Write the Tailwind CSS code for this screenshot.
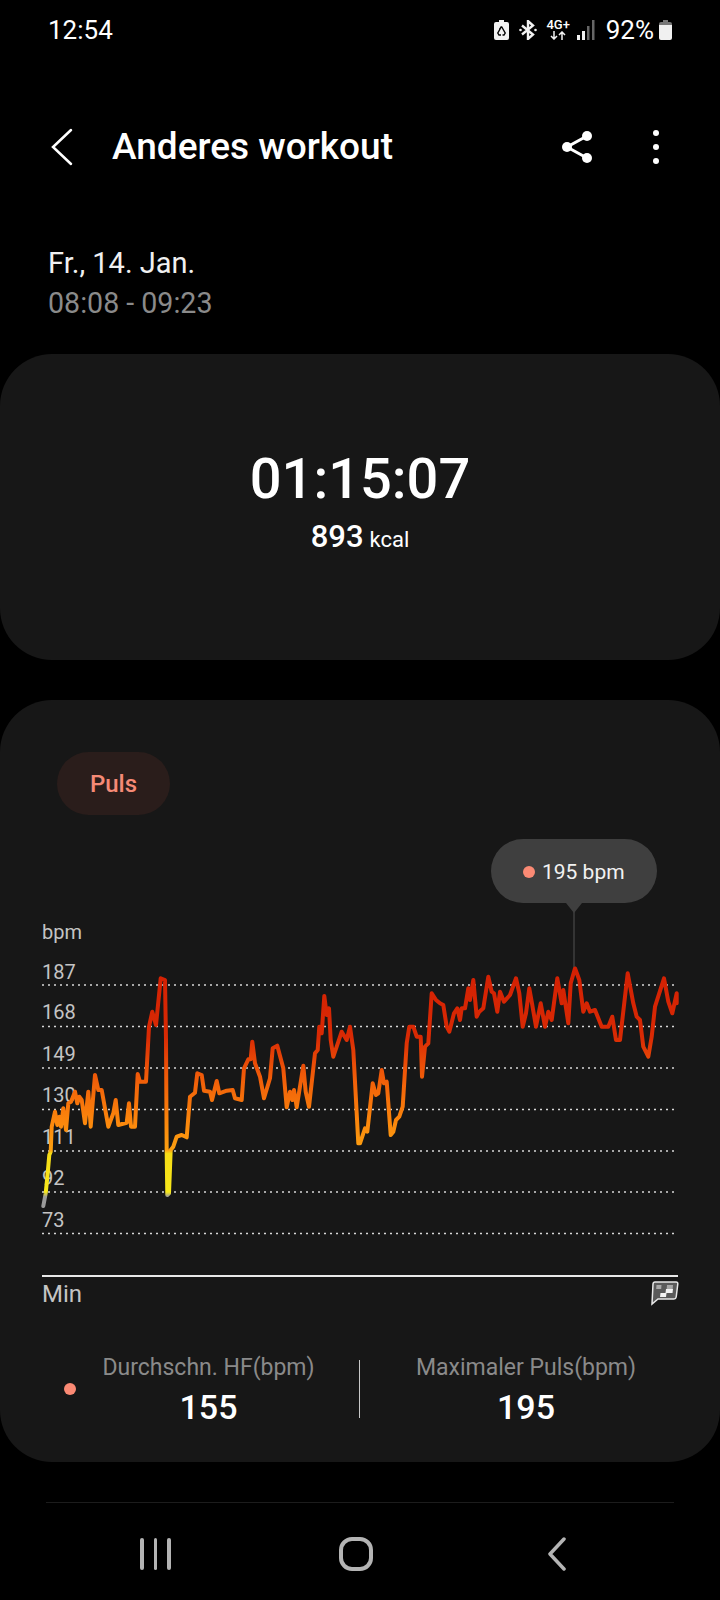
<!DOCTYPE html>
<html lang="en">
<head>
  <meta charset="UTF-8" />
  <meta name="viewport" content="width=device-width, initial-scale=1" />
  <title>Anderes workout</title>
  <script src="https://cdn.jsdelivr.net/npm/@tailwindcss/browser@4"></script>
</head>
<body class="bg-black">
  <div class="w-[720px] h-[1600px] overflow-hidden bg-black text-white font-['Roboto',sans-serif] flex flex-col">
    <!-- Status bar -->
    <div class="h-[60px] pl-[48px] pr-[48px] flex items-center justify-between">
      <span class="text-[26px] leading-none">12:54</span>
      <div class="flex items-center">
        <svg width="15" height="20" viewBox="0 0 15 20" class="mr-[10px]">
          <path fill="#f2f2f2" d="M5 0h5v2h3a2 2 0 0 1 2 2v14a2 2 0 0 1-2 2H2a2 2 0 0 1-2-2V4a2 2 0 0 1 2-2h3z"/>
          <path fill="none" stroke="#000" stroke-width="1.4" d="M7.500 6.500 3.800 13l1.200 2h2M7.500 6.500 11.200 13 10 15H8.500M5.500 9.500l2-3"/>
        </svg>
        <svg width="18" height="20" viewBox="0 0 18 20" class="mr-[11px]">
          <path fill="none" stroke="#f2f2f2" stroke-width="2.400" d="M3 5.500 14 14.500 9 19V1l5 4.500L3 14.500"/>
          <circle cx="1.500" cy="10" r="1.300" fill="#f2f2f2"/><circle cx="16.500" cy="10" r="1.300" fill="#f2f2f2"/>
        </svg>
        <div class="flex flex-col items-center w-[21px] mr-[8px]">
          <span class="text-[13px] leading-[12px] font-medium">4G+</span>
          <svg width="16" height="9" viewBox="0 0 16 9">
            <path fill="none" stroke="#f2f2f2" stroke-width="1.500" d="M4 0v8M1 5l3 3 3-3M12 9V1M9 4l3-3 3 3"/>
          </svg>
        </div>
        <svg width="18" height="20" viewBox="0 0 18 20" class="mr-[11px]">
          <rect x="0" y="15" width="3" height="5" fill="#f2f2f2"/><rect x="5" y="11" width="3" height="9" fill="#f2f2f2"/>
          <rect x="10" y="6" width="2.500" height="14" fill="#666"/><rect x="15" y="0" width="2.500" height="20" fill="#666"/>
        </svg>
        <span class="text-[26px] leading-none mr-[5px]">92%</span>
        <svg width="13" height="20" viewBox="0 0 13 20">
          <path fill="#777" d="M4 0h5v2h2a2 2 0 0 1 2 2v1H0V4a2 2 0 0 1 2-2h2z"/>
          <path fill="#f0f0f0" d="M0 5h13v13a2 2 0 0 1-2 2H2a2 2 0 0 1-2-2z"/>
        </svg>
      </div>
    </div>

    <!-- App bar -->
    <header class="h-[174px] flex items-center relative">
      <svg width="24" height="38" viewBox="0 0 24 38" class="ml-[50px]">
        <path fill="none" stroke="#fff" stroke-width="2.500" stroke-linecap="round" d="M21 2 3 19l18 17"/>
      </svg>
      <h1 class="ml-[38px] text-[37px] leading-none font-medium">Anderes workout</h1>
      <svg width="32" height="34" viewBox="0 0 32 34" class="ml-auto">
        <path fill="none" stroke="#fff" stroke-width="3" d="M26 6 6 17l20 11"/>
        <circle cx="26" cy="6" r="5" fill="#fff"/><circle cx="6" cy="17" r="5" fill="#fff"/><circle cx="26" cy="28" r="5" fill="#fff"/>
      </svg>
      <div class="ml-[60px] mr-[61px] flex flex-col gap-[8px]">
        <span class="w-[6px] h-[6px] rounded-full bg-white"></span>
        <span class="w-[6px] h-[6px] rounded-full bg-white"></span>
        <span class="w-[6px] h-[6px] rounded-full bg-white"></span>
      </div>
    </header>

    <!-- Date -->
    <div class="pl-[48px] pt-[9px] h-[120px]">
      <p class="text-[29px] leading-[40px] text-[#f0f0f0]">Fr., 14. Jan.</p>
      <p class="text-[28.6px] leading-[40px] text-[#8a8a8a]">08:08 - 09:23</p>
    </div>

    <!-- Duration card -->
    <section class="h-[306px] rounded-[52px] bg-[#171717] flex flex-col items-center pt-[92px]">
      <div class="text-[56px] leading-[66px] font-medium">01:15:07</div>
      <div class="mt-[6px] flex items-baseline leading-[38px] font-medium">
        <span class="text-[31px]">893</span><span class="text-[22px] ml-[6px] font-normal">kcal</span>
      </div>
    </section>

    <!-- Heart rate card -->
    <section class="mt-[40px] h-[763px] rounded-[52px] bg-[#171717] flex flex-col">
      <div class="pl-[57px] pt-[52px]">
        <span class="inline-flex items-center justify-center w-[113px] h-[63px] pt-[2px] rounded-full bg-[#2a1d1b] text-[#f58a76] text-[24px] font-medium">Puls</span>
      </div>
      <svg id="chart" width="720" height="480" viewBox="0 830 720 480" class="mt-[15px] block">
        <defs>
          <linearGradient id="hr" gradientUnits="userSpaceOnUse" x1="0" y1="1210" x2="0" y2="970">
            <stop offset="0.055" stop-color="#9a9a9a"/>
            <stop offset="0.075" stop-color="#f7e81a"/>
            <stop offset="0.235" stop-color="#f6dc16"/>
            <stop offset="0.25" stop-color="#fca011"/>
            <stop offset="0.375" stop-color="#fb850c"/>
            <stop offset="0.58" stop-color="#ee5508"/>
            <stop offset="0.72" stop-color="#d92a04"/>
            <stop offset="1" stop-color="#d32003"/>
          </linearGradient>
        </defs>
        <g id="grid" fill="#c4c4c4" font-size="20">
          <text x="42" y="939">bpm</text>
          <text x="42" y="979">187</text>
          <text x="42" y="1019">168</text>
          <text x="42" y="1061">149</text>
          <text x="42" y="1102">130</text>
          <text x="42" y="1144">111</text>
          <text x="42" y="1185">92</text>
          <text x="42" y="1227">73</text>
        </g>
        <g stroke="#d8d8d8" stroke-width="1.500" stroke-dasharray="2 4">
          <line x1="42" x2="674" y1="985" y2="985"/>
          <line x1="42" x2="674" y1="1026.500" y2="1026.500"/>
          <line x1="42" x2="674" y1="1068" y2="1068"/>
          <line x1="42" x2="674" y1="1109.500" y2="1109.500"/>
          <line x1="42" x2="674" y1="1151" y2="1151"/>
          <line x1="42" x2="674" y1="1192" y2="1192"/>
          <line x1="42" x2="674" y1="1233.500" y2="1233.500"/>
        </g>
        <polyline id="hrLine" fill="none" stroke="url(#hr)" stroke-width="4" stroke-linejoin="round" stroke-linecap="round"/>
        <!-- tooltip -->
        <line x1="574" x2="574" y1="905" y2="967" stroke="#3f3f3f" stroke-width="1.500"/>
        <path fill="#3f3f3f" d="M523 839h102a32 32 0 0 1 0 64h-43l-8 10-8-10h-43a32 32 0 0 1 0-64z"/>
        <circle cx="529" cy="872" r="6" fill="#fb8a74"/>
        <text x="542" y="879" fill="#f2f2f2" font-size="21">195 bpm</text>
        <!-- axis -->
        <rect x="42" y="1275" width="636" height="2" fill="#e8e8e8"/>
        <text x="42" y="1302" fill="#c4c4c4" font-size="24">Min</text>
        <path fill="#5a5a5a" stroke="#e8e8e8" stroke-width="1.500" d="M655 1282h21q2 0 1.800 2l-1.600 13q-.3 2-2.200 2h-16l-6 5 1-20q.2-2 2-2z"/>
        <path fill="#f4f4f4" d="M666 1289h7l-.5 4h-7zM660.500 1293h6l-.5 4h-6z"/>
        <path fill="#a8a8a8" d="M656.500 1285h5l-.3 4h-5zM667 1285h6l-.3 4h-6z"/>
      </svg>
      <div class="flex items-start pt-[44px]">
        <div class="w-[93px] pt-[29px] pl-[64px]"><span class="block w-[12px] h-[12px] rounded-full bg-[#fb8a74]"></span></div>
        <div class="w-[266px] pr-[35px] text-center whitespace-nowrap">
          <div class="text-[23px] leading-[28px] text-[#8a8a8a]">Durchschn. HF(bpm)</div>
          <div class="text-[34px] leading-[38px] mt-[6px] font-medium">155</div>
        </div>
        <div class="w-px h-[58px] bg-[#c8c8c8] mt-[6px]"></div>
        <div class="w-[332px] text-center whitespace-nowrap">
          <div class="text-[23px] leading-[28px] text-[#8a8a8a]">Maximaler Puls(bpm)</div>
          <div class="text-[34px] leading-[38px] mt-[6px] font-medium">195</div>
        </div>
      </div>
    </section>

    <!-- Nav bar -->
    <div class="mt-[40px] mx-[46px] h-px bg-[#1c1c1c]"></div>
    <nav class="h-[97px] pt-[4px] relative flex items-center">
      <div class="ml-[140px] flex gap-[10px]">
        <span class="w-[3.500px] h-[32px] rounded-full bg-[#b4b4b4]"></span>
        <span class="w-[3.500px] h-[32px] rounded-full bg-[#b4b4b4]"></span>
        <span class="w-[3.500px] h-[32px] rounded-full bg-[#b4b4b4]"></span>
      </div>
      <span class="ml-[168px] w-[34px] h-[34px] rounded-[13px] border-[4px] border-[#b4b4b4]"></span>
      <svg width="20" height="34" viewBox="0 0 20 34" class="ml-[174px]">
        <path fill="none" stroke="#b4b4b4" stroke-width="3.500" stroke-linecap="round" stroke-linejoin="round" d="M17 2 3 17l14 15"/>
      </svg>
    </nav>
  </div>

  <script>
    // heart rate trace, read off the 3x crops: [x, y] in crop pixels
    const leftPart = [[130,918],[137,880],[143,820],[148,765],[152,755],[155,680],[165,635],[172,675],[178,650],[183,680],[190,625],[198,690],[205,610],[213,605],[225,575],[232,610],[238,590],[245,600],[255,670],[265,575],[272,680],[285,525],[295,570],[305,570],[325,680],[340,640],[347,600],[355,675],[380,668],[387,610],[393,680],[405,680],[413,522],[420,545],[438,545],[447,380],[457,335],[468,375],[482,235],[495,240],[498,420],[500,760],[502,885],[507,880],[512,750],[520,740],[530,710],[545,705],[560,712],[570,590],[585,578],[592,520],[605,525],[612,572],[630,575],[636,600],[650,543],[658,580],[680,572],[698,570],[705,595],[725,600],[732,505],[745,478],[752,478],[757,425],[765,490],[780,530],[792,595],[810,535],[818,445],[832,437],[850,505],[860,622],[870,575],[877,600],[882,570],[890,622],[910,497],[917,575],[927,620],[945,460],[953,450],[958,380],[965,400],[973,288],[980,345],[987,325],[992,420],[1000,470],[1010,440],[1025,395],[1040,420],[1050,380],[1060,450],[1075,730]];
    const rightPart = [[0,940],[15,895],[22,905],[38,760],[48,795],[55,790],[65,720],[72,760],[80,755],[92,915],[100,905],[108,870],[118,860],[128,830],[140,640],[148,590],[160,590],[170,620],[182,620],[186,740],[195,650],[205,640],[215,490],[228,510],[240,520],[250,525],[260,590],[268,605],[282,550],[292,535],[300,570],[305,535],[315,535],[325,475],[330,510],[340,450],[350,560],[358,545],[370,535],[385,440],[395,485],[402,490],[412,545],[420,485],[432,515],[450,495],[468,445],[478,490],[488,590],[498,550],[508,475],[516,520],[528,590],[542,520],[555,590],[565,545],[575,570],[592,445],[605,520],[610,480],[625,580],[632,460],[645,415],[658,450],[670,545],[680,520],[690,545],[705,540],[725,590],[745,590],[757,560],[768,630],[780,630],[803,430],[820,520],[830,560],[840,570],[850,650],[865,680],[875,620],[885,530],[912,445],[925,515],[937,550],[950,490],[950,520]];
    const pts = [
      ...leftPart.map(([x, y]) => [x / 3, 900 + y / 3]),
      ...rightPart.map(([x, y]) => [360 + x / 3, 830 + y / 3]),
    ];
    document.getElementById('hrLine').setAttribute('points', pts.map(p => p[0].toFixed(1) + ',' + p[1].toFixed(1)).join(' '));
  </script>
</body>
</html>
